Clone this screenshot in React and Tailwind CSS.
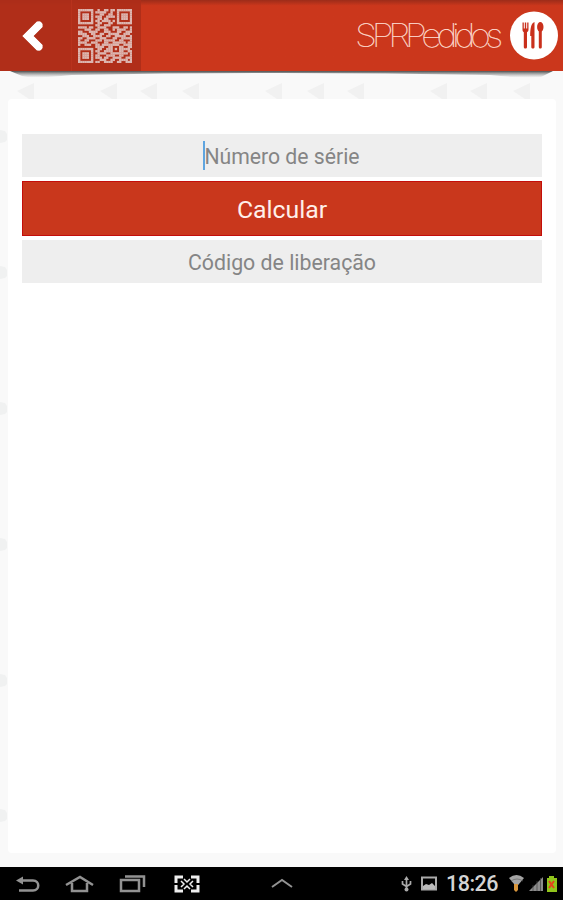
import React, { useState } from "react";

// 25x25 modules of the QR shortcut in the header
const QR_ROWS = [
  "1111111001001101101111111",
  "1000001011111001001000001",
  "1011101000110011001011101",
  "1011101011100111101011101",
  "1011101001101100001011101",
  "1000001011011110101000001",
  "1111111001100011001111111",
  "0000000011001110000000000",
  "1111011001111000111001101",
  "0001110011001100101111001",
  "1100011110001110001100111",
  "1111001100110011111001110",
  "0011100111100110011111001",
  "1100111100111000110011111",
  "1001100011101111100110001",
  "1111001110001100111111011",
  "1001110011011111111001111",
  "0000000011110011000110011",
  "1111111001100111010111110",
  "1000001011001111000110011",
  "1011101001111001111111101",
  "1011101011000111100110001",
  "1011101011101100111100111",
  "1000001000111001100111101",
  "1111111011001111001100111",
];

// faint arrows of the textured background
const TOP_ARROWS = [17, 100, 140, 182, 265, 307, 347, 430, 470, 513];
const LEFT_ARROWS = [136, 272, 408, 544, 680, 815];

const QrCode = () => (
  <svg viewBox="0 0 25 25" className="mr-[3px] h-[54px] w-[54px] fill-[#ddb6b0]">
    {QR_ROWS.map((row, y) =>
      [...row].map((cell, x) => (cell === "1" ? <rect key={`${x}-${y}`} x={x} y={y} width="1.1" height="1.1" /> : null))
    )}
  </svg>
);

const Texture = () => (
  <svg width="563" height="797" className="absolute inset-x-0 top-0">
    {TOP_ARROWS.map((x) => (
      <path key={x} d={`M${x} 20 L${x + 17} 12 V28 H${x + 12} Z`} fill="#f1f1f1" />
    ))}
    {LEFT_ARROWS.map((y) => (
      <path key={y} d={`M0 ${y - 77} L5 ${y - 76} L7 ${y - 73} V${y - 67} L5 ${y - 65} L0 ${y - 64} Z`} fill="#f0f1f1" />
    ))}
  </svg>
);

const Header = () => (
  <header className="relative z-10 flex h-[71px] shrink-0 bg-[#cb371c] bg-linear-to-b from-[#9d2c19] via-[#cb371c] via-8% to-[#cb371c]">
    <button className="flex h-full w-[71px] items-center justify-center bg-[#ad2d1a]/90">
      <svg width="24" height="36" viewBox="0 0 24 36" className="relative left-[-3px]">
        <path d="M19 6 L7 18 L19 30" fill="none" stroke="#fff" strokeWidth="8" strokeLinejoin="miter" strokeLinecap="butt" />
        <path d="M18 7 L7 18 L18 29" fill="none" stroke="#fff" strokeWidth="7" strokeLinecap="round" />
      </svg>
    </button>
    <button className="flex h-full w-[70px] items-center justify-center border-l border-[#b8321d] bg-[#ad2d1a]/90">
      <QrCode />
    </button>
    <div className="flex flex-1 items-center justify-end gap-[8px] pr-[5px]">
      <span className="w-[147px] origin-left scale-x-112 whitespace-nowrap font-['Inter',sans-serif] text-[32px] font-thin leading-none tracking-[-4.7px] text-[#ffe0d8] [-webkit-text-stroke:0.2px_#ffd9ce]">
        SPRPedidos
      </span>
      <svg width="48" height="49" viewBox="0 0 48 49">
        <circle cx="24" cy="24.5" r="24" fill="#fff" />
        <g fill="#c9301c">
          <path d="M12.500 11.500h1.300v6h1v-6h1.400v6h1v-6h1.300v7c0 1.500-.7 2.300-1.500 2.800V36c0 2-3.200 2-3.200 0V21.300c-.8-.5-1.300-1.300-1.300-2.800z" />
          <path d="M24.500 11V36c0 2-3.200 2-3.200 0V25h-1.100c0-6 .5-13 4.300-14z" />
          <ellipse cx="30.300" cy="16" rx="3.200" ry="5" />
          <path d="M28.800 20h3v16c0 2-3 2-3 0z" />
        </g>
      </svg>
    </div>
  </header>
);

const StatusBar = () => (
  <footer className="flex h-[33px] shrink-0 items-center bg-black">
    <svg width="400" height="33" viewBox="0 0 400 33" fill="none" stroke="#929292" strokeWidth="2">
      {/* back */}
      <path d="M21 13.500h12c7 0 7 10 0 10H19" strokeWidth="2.500" />
      <path d="M16 13.500l7-4v8z" fill="#929292" stroke="none" />
      {/* home */}
      <path d="M66 18l14-8 13 8M72 16v8h15v-8" strokeWidth="2.500" />
      {/* recent apps */}
      <path d="M121 13h18v11h-18zM125 9.500h19V20" strokeWidth="2.500" />
      {/* screen capture */}
      <g stroke="#eee">
        <path d="M183 10h-7v6M191 10h7v6M176 18v6h7M198 18v6h-7" strokeWidth="3" />
        <path d="M181 14l3 3-3 3M193 14l-3 3 3 3M184 12l3 3 3-3M184 22l3-3 3 3" strokeWidth="1.500" />
      </g>
      <path d="M272 20l10-7 10 7" />
    </svg>
    <svg width="46" height="33" viewBox="400 0 46 33" fill="none" stroke="#aaa">
      {/* usb */}
      <path d="M406.500 11v12M402.500 14v3l4 2.500 4-2.500v-3" strokeWidth="1.700" />
      <path d="M404 13l2.500-4 2.500 4z" fill="#aaa" stroke="none" />
      <circle cx="406.500" cy="22.500" r="2" fill="#aaa" stroke="none" />
      {/* picture */}
      <path d="M422 10.500h14v12h-14z" strokeWidth="2" />
      <path d="M423 19l3-2 3 1 3-2 3 3v3h-12z" fill="#bbb" stroke="none" />
    </svg>
    <span className="w-[62px] pt-px font-['Roboto',sans-serif] text-[21.5px] font-medium leading-none tracking-[-0.5px] text-[#d4d4d4]">
      18:26
    </span>
    <svg width="55" height="33" viewBox="508 0 55 33">
      {/* wifi with transfer arrow */}
      <path d="M509 11q7.500-6 15 0l-7.500 9z" fill="#a5a5a5" />
      <path d="M511 14q6-4 12 0" stroke="#666" strokeWidth="0.700" fill="none" />
      <path d="M514 17h4v6l-2 2-2-2z" fill="#d9963c" />
      {/* signal */}
      <path d="M529 24l14-14v14z" fill="#8c8c8c" />
      <path d="M533 18v6M537 14v10M540.500 11v13" stroke="#444" strokeWidth="0.700" />
      {/* battery */}
      <path d="M549 9h5v2h3v14h-10V11h2z" fill="#91c51c" />
      <path d="M549 14l5 7M554 14l-5 7" stroke="#e6421e" strokeWidth="2" />
    </svg>
  </footer>
);

const App = () => {
  const [serial, setSerial] = useState("");

  return (
    <div className="flex h-[900px] w-[563px] flex-col overflow-hidden bg-[#f9f9f9] font-['Roboto',sans-serif]">
      <Header />

      <main className="relative flex flex-1 flex-col pt-7 pr-[7px] pb-[14px] pl-2">
        <Texture />
        {/* header drop shadow */}
        <svg width="563" height="12" className="absolute inset-x-0 top-0">
          <defs>
            <linearGradient id="shade" x1="0" y1="0" x2="0" y2="1">
              <stop offset="0" stopColor="#444" stopOpacity="0.95" />
              <stop offset="1" stopColor="#999" stopOpacity="0" />
            </linearGradient>
          </defs>
          <path d="M10 0H553L541 6Q528 8 490 4Q281 0 72 4Q32 8 22 5Z" fill="url(#shade)" />
        </svg>

        <section className="relative flex flex-1 flex-col gap-1 rounded-sm bg-white px-[14px] pt-[35px]">
          <div className="relative flex h-[43px] items-center justify-center bg-[#eee]">
            <input
              value={serial}
              onChange={(e) => setSerial(e.target.value)}
              placeholder="Número de série"
              className="h-full w-full pt-[2px] text-center text-[21.2px] text-gray-700 outline-none placeholder:text-[#858585]"
            />
            <span className="absolute left-[181px] top-[7px] h-[29px] w-[1.5px] bg-[#5fa5e0]" />
          </div>
          <button className="h-[55px] border border-[#c40d0a] bg-[#c9371c] pt-[2px] text-[24.8px] text-[#fff0ea]">
            Calcular
          </button>
          <div className="flex h-[43px] items-center justify-center bg-[#eee] pt-[2px] text-[21.3px] text-[#858585]">
            Código de liberação
          </div>
        </section>
      </main>

      <StatusBar />
    </div>
  );
};

export default App;
